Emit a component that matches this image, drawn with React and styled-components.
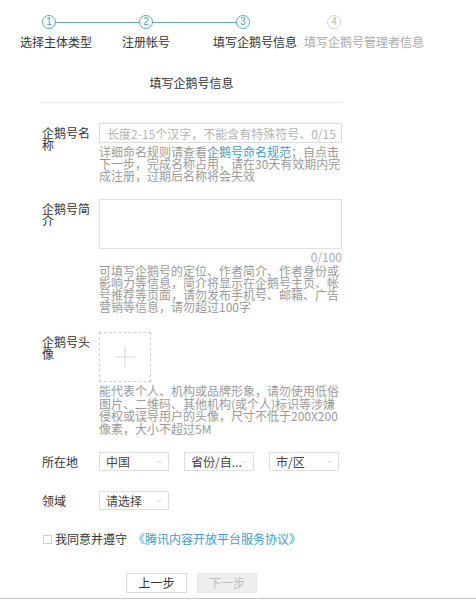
import React from "react";
import styled, { createGlobalStyle } from "styled-components";

const GlobalStyle = createGlobalStyle`
  html, body {
    margin: 0;
    padding: 0;
    background: #fff;
  }
  body {
    font-family: "Noto Sans CJK SC", "Noto Sans", sans-serif;
    color: #333;
  }
`;

const Page = styled.div`
  width: 476px;
  height: 602px;
  padding-top: 15px;
  box-sizing: border-box;
  overflow: hidden;
`;

// 步骤条
const StepDots = styled.div`
  display: flex;
  align-items: center;
  padding-left: 42px;
  height: 14px;
`;

const Dot = styled.div`
  width: 14px;
  height: 14px;
  box-sizing: border-box;
  border-radius: 50%;
  border: 1px solid ${(p) => (p.$active ? "#58aabb" : "#d4d4d4")};
  color: ${(p) => (p.$active ? "#4fa4b6" : "#b8b8b8")};
  font-family: "Liberation Sans", sans-serif;
  font-size: 10px;
  line-height: 12px;
  text-align: center;
`;

const Connector = styled.div`
  width: ${(p) => p.$w}px;
  height: 1px;
  background: ${(p) => (p.$show ? "#5fa9b6" : "transparent")};
`;

const StepLabels = styled.div`
  display: flex;
  margin-top: 6px;
  font-size: 12px;
  line-height: 14px;
  white-space: nowrap;
`;

const StepLabel = styled.span`
  margin-left: ${(p) => p.$ml}px;
  color: ${(p) => (p.$done ? "#333" : "#aaa")};
`;

// 内容
const Content = styled.div`
  margin-left: 40px;
  width: 303px;
`;

const Title = styled.div`
  margin-top: 27px;
  text-align: center;
  font-size: 12px;
  line-height: 14px;
  color: #333;
`;

const Divider = styled.div`
  margin-top: 12px;
  height: 1px;
  background: #ececec;
`;

const Form = styled.div`
  margin-left: 2px;
`;

const Row = styled.div`
  display: grid;
  grid-template-columns: 57px 243px;
  margin-top: ${(p) => p.$mt}px;
`;

const Label = styled.div`
  width: 48px;
  font-size: 12px;
  line-height: ${(p) => (p.$inline ? "19px" : "12px")};
  padding-top: ${(p) => (p.$inline ? 0 : 4)}px;
  color: #333;
  word-break: break-all;
`;

const Control = styled.div`
  display: flex;
  flex-direction: column;
`;

const TextInput = styled.input`
  width: 243px;
  height: 20px;
  box-sizing: border-box;
  border: 1px solid #dcdcdc;
  padding: 0 2px 0 7px;
  font-family: inherit;
  font-size: 12px;
  outline: none;
  &::placeholder {
    color: #b4b4b4;
  }
`;

const TextArea = styled.textarea`
  width: 243px;
  height: 50px;
  box-sizing: border-box;
  border: 1px solid #e0e0e0;
  resize: none;
  outline: none;
  font-family: inherit;
  margin: 0;
  display: block;
`;

const Counter = styled.div`
  margin-top: 2px;
  text-align: right;
  font-size: 12px;
  line-height: 12px;
  color: #aaa;
`;

const Hint = styled.div`
  margin-top: ${(p) => p.$mt}px;
  font-size: 12px;
  line-height: ${(p) => p.$lh || 12}px;
  color: #9a9a9a;
  word-break: break-all;
`;

const Link = styled.a`
  color: #3d9ccb;
  text-decoration: none;
  margin-left: ${(p) => p.$ml || 0}px;
`;

const Upload = styled.div`
  width: 52px;
  height: 50px;
  box-sizing: border-box;
  border: 1px dashed #cfcfcf;
  display: flex;
  align-items: center;
  justify-content: center;
`;

const Selects = styled.div`
  display: flex;
  gap: 15px;
`;

const SelectBox = styled.div`
  width: 70px;
  height: 19px;
  box-sizing: border-box;
  border: 1px solid #dedede;
  padding: 0 6px;
  display: flex;
  align-items: center;
  justify-content: space-between;
  font-size: 12px;
  color: #444;
  white-space: nowrap;
`;

const Agree = styled.div`
  margin-top: 22px;
  margin-left: 1px;
  display: flex;
  align-items: center;
  font-size: 12px;
  line-height: 14px;
  color: #333;
  white-space: nowrap;
`;

const Check = styled.span`
  width: 7px;
  height: 7px;
  border: 1px solid #cfcfcf;
  margin-right: 3px;
`;

const Buttons = styled.div`
  display: flex;
  gap: 10px;
  margin-top: 27px;
  padding-left: 126px;
`;

const Button = styled.button`
  width: ${(p) => p.$w}px;
  height: 20px;
  box-sizing: border-box;
  padding: 0;
  border: 1px solid ${(p) => (p.disabled ? "#e6e6e6" : "#dadada")};
  background: ${(p) => (p.disabled ? "#eeeeee" : "#fff")};
  color: ${(p) => (p.disabled ? "#bdbdbd" : "#333")};
  font-family: inherit;
  font-size: 12px;
  line-height: 18px;
`;

const BottomRule = styled.div`
  margin-top: 5px;
  height: 1px;
  background: #c6c6c6;
`;

const Chevron = () => (
  <svg width="5" height="4" viewBox="0 0 5 4">
    <path d="M0.5 1 L2.5 3 L4.5 1" fill="none" stroke="#c4c4c4" strokeWidth="0.8" />
  </svg>
);

const Plus = () => (
  <svg width="20" height="20" viewBox="0 0 20 20">
    <path d="M10 0 V20 M0 10 H20" stroke="#d8d8d8" strokeWidth="1.2" />
  </svg>
);

const Select = ({ text }) => (
  <SelectBox>
    <span>{text}</span>
    <Chevron />
  </SelectBox>
);

const App = () => {
  return (
    <Page>
      <GlobalStyle />
      <StepDots>
        <Dot $active>1</Dot>
        <Connector $w={83} $show />
        <Dot $active>2</Dot>
        <Connector $w={83} $show />
        <Dot $active>3</Dot>
        <Connector $w={77} />
        <Dot>4</Dot>
      </StepDots>
      <StepLabels>
        <StepLabel $ml={20} $done>选择主体类型</StepLabel>
        <StepLabel $ml={30} $done>注册帐号</StepLabel>
        <StepLabel $ml={43} $done>填写企鹅号信息</StepLabel>
        <StepLabel $ml={7}>填写企鹅号管理者信息</StepLabel>
      </StepLabels>

      <Content>
        <Title>填写企鹅号信息</Title>
        <Divider />
        <Form>
          <Row $mt={20}>
            <Label>企鹅号名称</Label>
            <Control>
              <TextInput placeholder="长度2-15个汉字，不能含有特殊符号、0/15" />
              <Hint $mt={3}>
                详细命名规则请查看<Link>企鹅号命名规范</Link>；自点击下一步，完成名称占用，请在30天有效期内完成注册，过期后名称将会失效
              </Hint>
            </Control>
          </Row>

          <Row $mt={17}>
            <Label>企鹅号简介</Label>
            <Control>
              <TextArea />
              <Counter>0/100</Counter>
              <Hint $mt={2}>
                可填写企鹅号的定位、作者简介、作者身份或影响力等信息，简介将显示在企鹅号主页、帐号推荐等页面，请勿发布手机号、邮箱、广告营销等信息，请勿超过100字
              </Hint>
            </Control>
          </Row>

          <Row $mt={19}>
            <Label>企鹅号头像</Label>
            <Control>
              <Upload>
                <Plus />
              </Upload>
              <Hint $mt={3} $lh={12.5}>
                能代表个人、机构或品牌形象，请勿使用低俗图片、二维码、其他机构(或个人)标识等涉嫌侵权或误导用户的头像，尺寸不低于200X200像素，大小不超过5M
              </Hint>
            </Control>
          </Row>

          <Row $mt={17}>
            <Label $inline>所在地</Label>
            <Selects>
              <Select text="中国" />
              <Select text="省份/自..." />
              <Select text="市/区" />
            </Selects>
          </Row>

          <Row $mt={20}>
            <Label $inline>领域</Label>
            <Selects>
              <Select text="请选择" />
            </Selects>
          </Row>

          <Agree>
            <Check />
            我同意并遵守<Link $ml={6}>《腾讯内容开放平台服务协议》</Link>
          </Agree>
        </Form>
      </Content>

      <Buttons>
        <Button $w={61}>上一步</Button>
        <Button $w={60} disabled>下一步</Button>
      </Buttons>
      <BottomRule />
    </Page>
  );
};

export default App;
